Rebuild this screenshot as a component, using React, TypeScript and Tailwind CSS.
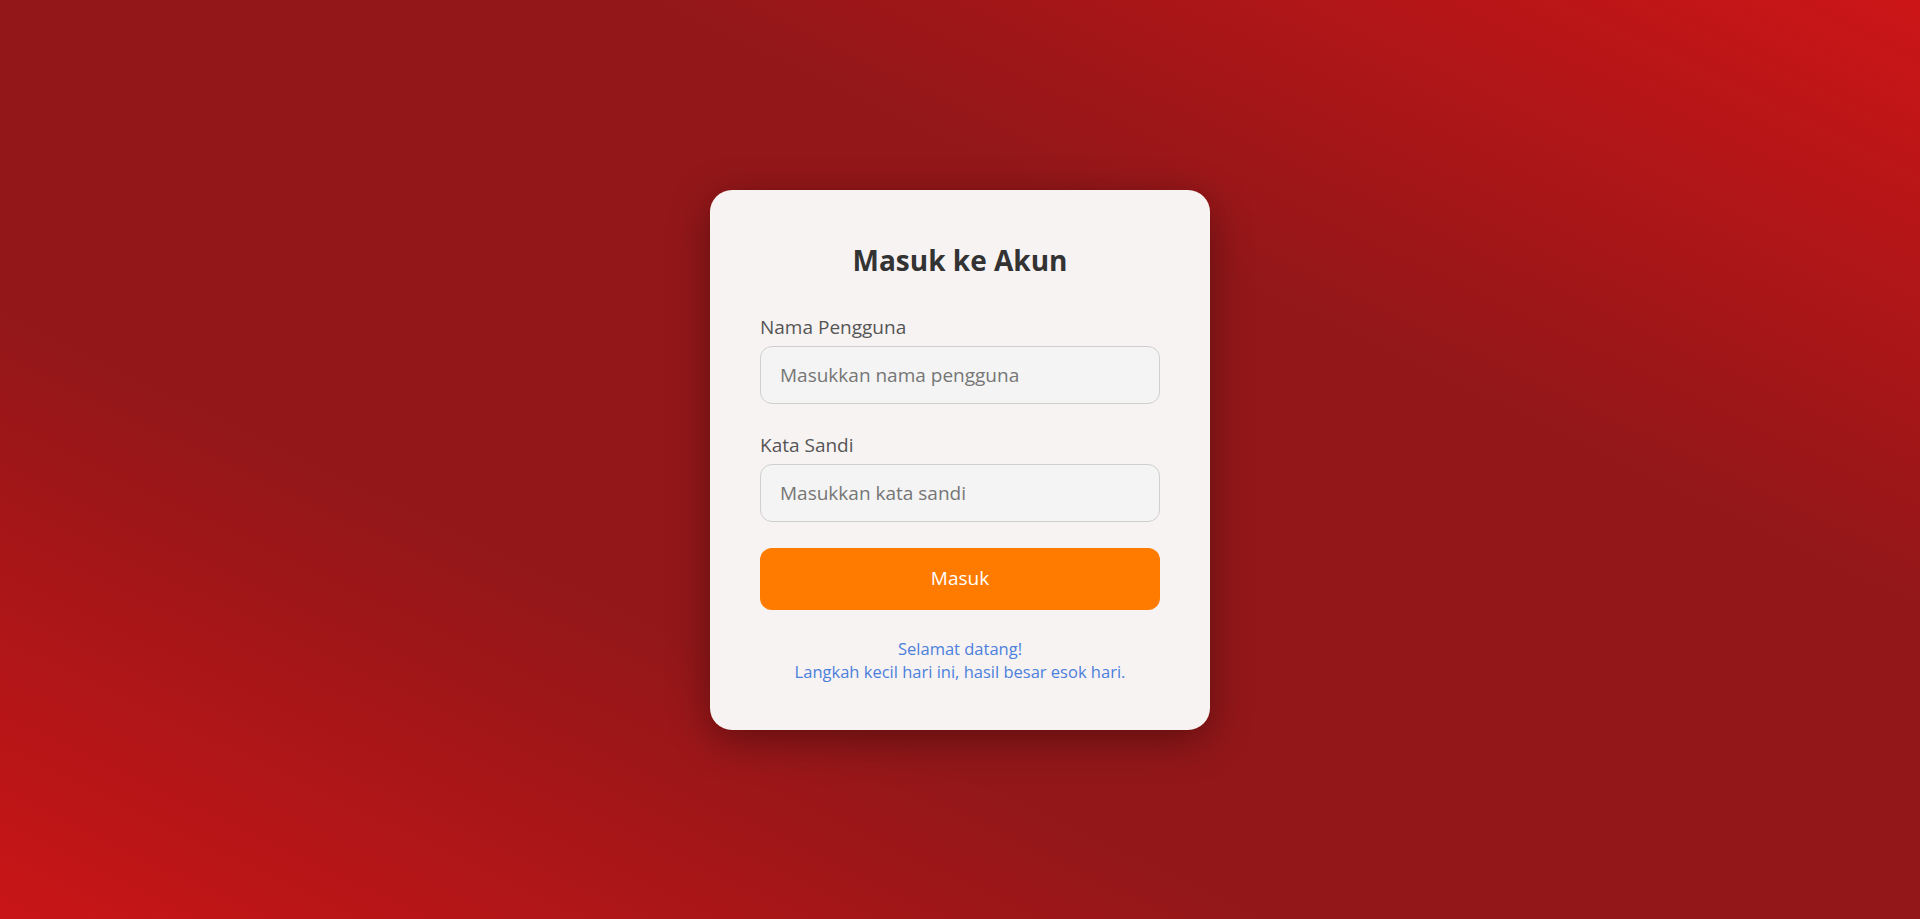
import { useState } from 'react'

export default function App() {
  const [username, setUsername] = useState('')
  const [password, setPassword] = useState('')

  return (
    <div className="flex min-h-screen w-full items-center justify-center bg-[linear-gradient(to_top_right,#c91517_0%,#931719_33%,#931719_67%,#cc1517_100%)] font-['Open_Sans',sans-serif]">
      <div className="w-[500px] rounded-[22px] bg-[#f8f3f3] px-[50px] pt-[53px] pb-[47px] shadow-[0_10px_40px_rgba(0,0,0,0.35)]">
        <h1 className="text-center text-[28px] font-bold leading-[34px] text-[#333333]">Masuk ke Akun</h1>

        <form
          className="mt-[38px]"
          onSubmit={(e) => {
            e.preventDefault()
          }}
        >
          <label className="block text-[19px] leading-[24px] text-[#555555]">Nama Pengguna</label>
          <input
            value={username}
            onChange={(e) => setUsername(e.target.value)}
            placeholder="Masukkan nama pengguna"
            className="mt-[7px] block h-[58px] w-full rounded-[12px] border border-[#cfcfcf] bg-[#f4f4f4] px-[19px] text-[19px] text-[#333333] outline-none placeholder:text-[#767676]"
          />

          <label className="mt-[29px] block text-[19px] leading-[24px] text-[#555555]">Kata Sandi</label>
          <input
            type="password"
            value={password}
            onChange={(e) => setPassword(e.target.value)}
            placeholder="Masukkan kata sandi"
            className="mt-[7px] block h-[58px] w-full rounded-[12px] border border-[#cfcfcf] bg-[#f4f4f4] px-[19px] text-[19px] text-[#333333] outline-none placeholder:text-[#767676]"
          />

          <button
            type="submit"
            className="mt-[26px] block h-[62px] w-full rounded-[12px] bg-[#ff7b00] text-[19px] text-white"
          >
            Masuk
          </button>
        </form>

        <p className="mt-[27px] text-center text-[16.5px] leading-[23px] text-[#4b80dc]">
          Selamat datang!
          <br />
          Langkah kecil hari ini, hasil besar esok hari.
        </p>
      </div>
    </div>
  )
}
